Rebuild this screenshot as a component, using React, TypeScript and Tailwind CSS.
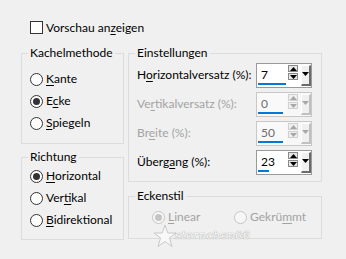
import React from "react";

const font = { fontFamily: 'Lato, "Liberation Sans", sans-serif' };

function U({ children }: { children: React.ReactNode }) {
  return <span className="underline underline-offset-2 decoration-1">{children}</span>;
}

function Radio({ checked, disabled }: { checked?: boolean; disabled?: boolean }) {
  return (
    <span
      className={`w-[13px] h-[13px] rounded-full border flex items-center justify-center shrink-0 ${
        disabled ? "border-[#c4c4c4] bg-[#f7f7f7]" : "border-[#333] bg-white"
      }`}
    >
      {checked && (
        <span className={`w-[7px] h-[7px] rounded-full ${disabled ? "bg-[#c4c4c4]" : "bg-[#333]"}`} />
      )}
    </span>
  );
}

function RadioRow({
  label,
  checked,
  disabled,
}: {
  label: React.ReactNode;
  checked?: boolean;
  disabled?: boolean;
}) {
  return (
    <div className="h-[22px] flex items-center gap-[3px]">
      <Radio checked={checked} disabled={disabled} />
      <span className={disabled ? "text-[#a3a3a3]" : "text-black"}>{label}</span>
    </div>
  );
}

function Group({
  title,
  className,
  children,
}: {
  title: string;
  className: string;
  children: React.ReactNode;
}) {
  return (
    <fieldset className="border border-[#dcdcdc]">
      <legend className="ml-[6px] px-[2px] leading-[16px] text-black">{title}</legend>
      <div className={className}>{children}</div>
    </fieldset>
  );
}

function Tri({ up, color }: { up?: boolean; color: string }) {
  return (
    <svg width="7" height="4" viewBox="0 0 7 4">
      <polygon points={up ? "0,4 7,4 3.5,0" : "0,0 7,0 3.5,4"} fill={color} />
    </svg>
  );
}

function Spin({ value, bar, disabled }: { value: string; bar: number; disabled?: boolean }) {
  const ink = disabled ? "#a8a8a8" : "#000";
  const btn = disabled ? "border-[#d0d0d0] bg-[#efefef]" : "border-[#8a8a8a] bg-[#e6e6e6]";
  return (
    <div
      className={`w-[56px] h-[25px] border flex shrink-0 ${
        disabled ? "border-[#c8c8c8] bg-[#f7f7f7]" : "border-[#9a9a9a] bg-white"
      }`}
    >
      <div className={`w-[30px] flex flex-col ${disabled ? "bg-[#f9f9f9]" : "bg-white"}`}>
        <span className={`pl-[4px] pt-[3px] leading-[16px] ${disabled ? "text-[#6d6d6d]" : "text-black"}`}>
          {value}
        </span>
        <div className="mt-auto mb-[2px] ml-[1px] h-[3px] bg-[#0078d7]" style={{ width: bar }} />
      </div>
      <div className="ml-[1px] mt-[1px] w-[10px] flex flex-col gap-[1px]">
        <div className={`h-[7px] border flex items-center justify-center ${btn}`}>
          <Tri up color={ink} />
        </div>
        <div className={`h-[7px] border flex items-center justify-center ${btn}`}>
          <Tri color={ink} />
        </div>
      </div>
      <div
        className={`ml-[3px] mt-[1px] w-[10px] h-[21px] border-t border-l border-r-2 border-b-2 flex items-center justify-center pb-[3px] border-t-white border-l-white bg-[#f0f0f0] ${
          disabled ? "border-r-[#c0c0c0] border-b-[#c0c0c0]" : "border-r-[#6a6a6a] border-b-[#6a6a6a]"
        }`}
      >
        <Tri color={ink} />
      </div>
    </div>
  );
}

function SpinRow({
  label,
  value,
  bar,
  disabled,
}: {
  label: React.ReactNode;
  value: string;
  bar: number;
  disabled?: boolean;
}) {
  return (
    <div className="h-[25px] flex items-center justify-between">
      <span className={`pb-[2px] whitespace-nowrap ${disabled ? "text-[#a3a3a3]" : "text-black"}`}>{label}</span>
      <Spin value={value} bar={bar} disabled={disabled} />
    </div>
  );
}

export default function App() {
  return (
    <div className="w-[346px] h-[259px] bg-[#f0f0f0] text-[12px] leading-[16px] relative overflow-hidden" style={font}>
      {/* Vorschau */}
      <div className="pt-[20px] pl-[30px] flex items-center gap-[3px] h-[35px]">
        <span className="w-[13px] h-[13px] border border-[#333] bg-white shrink-0" />
        <span>
          Vorschau an<U>z</U>eigen
        </span>
      </div>

      <div className="flex pl-[21px] pt-[10px] gap-[4px]">
        {/* Left column */}
        <div className="w-[103px] flex flex-col gap-[5px]">
          <Group title="Kachelmethode" className="pl-[8px] pt-[7px] pb-[9px]">
            <RadioRow label={<><U>K</U>ante</>} />
            <RadioRow label={<>E<U>c</U>ke</>} checked />
            <RadioRow label={<><U>S</U>piegeln</>} />
          </Group>
          <Group title="Richtung" className="pl-[8px] pt-0 pb-[8px]">
            <RadioRow label={<><U>H</U>orizontal</>} checked />
            <RadioRow label={<>Ver<U>t</U>ikal</>} />
            <RadioRow label={<><U>B</U>idirektional</>} />
          </Group>
        </div>

        {/* Right column */}
        <div className="w-[194px] flex flex-col gap-[6px]">
          <Group title="Einstellungen" className="pl-[8px] pr-[9px] pt-[2px] pb-[6px] flex flex-col gap-[4px]">
            <SpinRow label={<>H<U>o</U>rizontalversatz (%):</>} value="7" bar={28} />
            <SpinRow label={<>Ve<U>r</U>tikalversatz (%):</>} value="0" bar={25} disabled />
            <SpinRow label={<>Br<U>e</U>ite (%):</>} value="50" bar={25} disabled />
            <SpinRow label={<>Überg<U>a</U>ng (%):</>} value="23" bar={11} />
          </Group>
          <Group title="Eckenstil" className="pl-[23px] pt-[2px] pb-[10px]">
            <div className="flex">
              <div className="w-[82px]">
                <RadioRow label={<><U>L</U>inear</>} checked disabled />
              </div>
              <RadioRow label={<>Gekrü<U>m</U>mt</>} disabled />
            </div>
          </Group>
        </div>
      </div>

      {/* watermark */}
      <div className="absolute left-[153px] top-[224px] flex items-end pointer-events-none">
        <svg width="24" height="24" viewBox="0 0 24 24">
          <polygon
            points="12,1 14.8,9 23,9 16.4,14 19,22.5 12,17.5 5,22.5 7.6,14 1,9 9.2,9"
            fill="#f8f8f8"
            stroke="#c8c8c8"
            strokeWidth="1"
          />
        </svg>
        <span
          className="italic text-[11px] leading-[12px] text-white -ml-[2px] mb-[6px] tracking-[0.5px]"
          style={{ textShadow: "0 0 1px #a0a0a0, 0 0 1px #a0a0a0", fontFamily: '"DejaVu Serif", serif' }}
        >
          sternchen06
        </span>
      </div>
    </div>
  );
}
